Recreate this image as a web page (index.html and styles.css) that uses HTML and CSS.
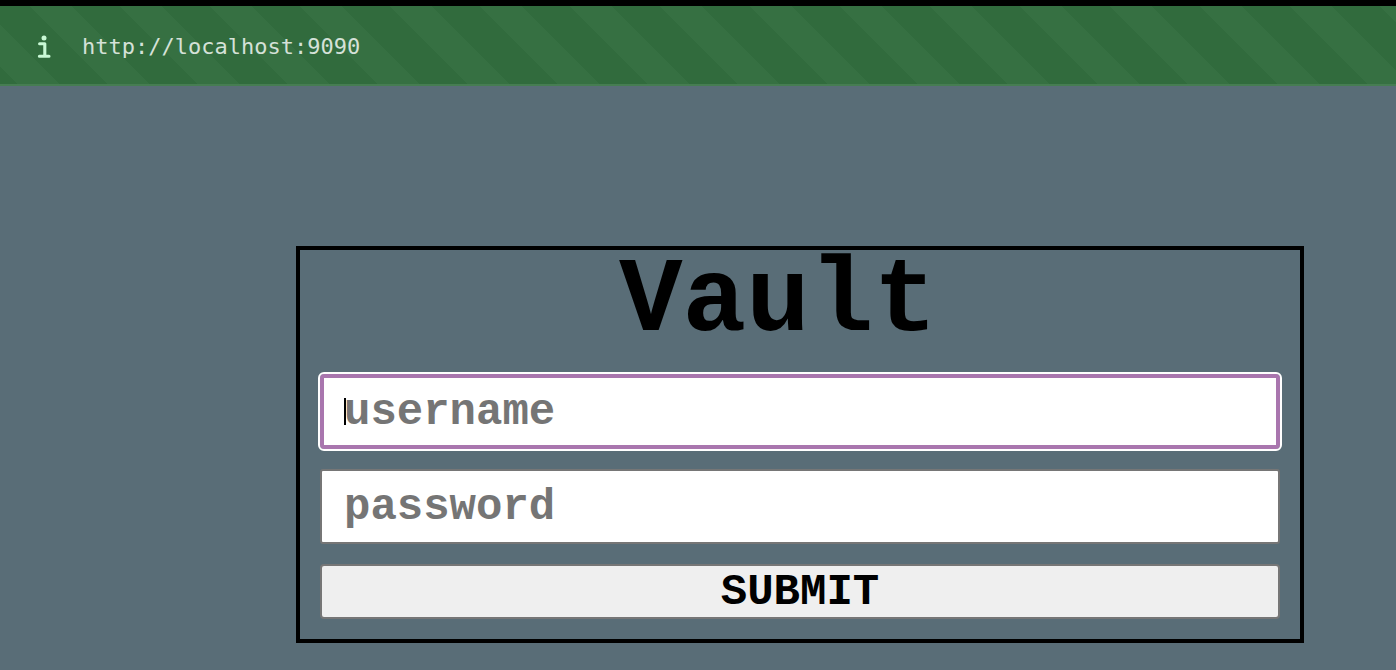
FILE: index.html
```html
<!DOCTYPE html>
<html lang="en">
<head>
<meta charset="utf-8">
<title>Vault</title>
<link rel="stylesheet" href="styles.css">
</head>
<body>
<header class="address-bar">
  <svg class="info-icon" viewBox="0 0 14 24" aria-hidden="true">
    <circle cx="7" cy="3" r="2.5"/>
    <path d="M2.6 8.8H7.8V20.6M2.4 21.2H12" fill="none" stroke="currentColor" stroke-width="3.1" stroke-linecap="round" stroke-linejoin="round"/>
  </svg>
  <span class="address">http://localhost:9090</span>
</header>
<main class="page">
  <form class="card">
    <h1 class="title">Vault</h1>
    <div class="control">
      <input class="field" type="text" name="username" placeholder="username" aria-label="username" autocomplete="off" autofocus>
      <span class="caret" aria-hidden="true"></span>
    </div>
    <input class="field" type="password" name="password" placeholder="password" aria-label="password">
    <button class="submit" type="submit">SUBMIT</button>
  </form>
</main>
</body>
</html>
```
FILE: styles.css
```css
* {
  box-sizing: border-box;
}

body {
  margin: 0;
  background: #596d77;
  color: #000;
  font-family: "Liberation Mono", monospace;
  font-weight: 700;
}

.address-bar {
  display: flex;
  align-items: center;
  gap: 31px;
  height: 86px;
  padding: 4px 0 0 37px;
  border-top: 6px solid #000;
  border-bottom: 2px solid #467d52;
  background: linear-gradient(45deg, #316b3d 9.5%, #367042 9.5% 33%, #316b3d 33% 59.5%, #367042 59.5% 83%, #316b3d 83%) left bottom / 90px 90px;
}

.info-icon {
  width: 14px;
  height: 24px;
  color: #c9f8d5;
  fill: currentColor;
}

.address {
  color: #d5e1d8;
  font: 400 22px/32px "DejaVu Sans Mono", monospace;
}

.page {
  padding: 160px 92px 27px 296px;
}

.card {
  display: flex;
  flex-direction: column;
  gap: 20px;
  padding: 0 20px 20px;
  border: 4px solid #000;
}

.title {
  margin: 0;
  padding-right: 44px;
  font-size: 106px;
  line-height: 104px;
  text-align: center;
}

.control {
  display: flex;
  position: relative;
}

.caret {
  display: none;
  position: absolute;
  top: 24px;
  left: 24px;
  width: 2px;
  height: 27px;
  background: #000;
}

.field {
  width: 100%;
  height: 75px;
  padding: 0 22px;
  border: 2px solid #767676;
  border-radius: 3px;
  background: #fff;
  color: #000;
  caret-color: transparent;
  font: inherit;
  font-size: 44px;
}

.field::placeholder {
  color: #757575;
  opacity: 1;
}

.field:focus {
  padding: 0 20px;
  border: 4px solid #a976ae;
  border-radius: 4px;
  outline: 2px solid #fff;
}

.field:not(:placeholder-shown) {
  caret-color: #000;
}

.field:focus:placeholder-shown + .caret {
  display: block;
}

.submit {
  height: 55px;
  padding: 0;
  border: 2px solid #767676;
  border-radius: 4px;
  background: #efefef;
  color: #000;
  font: inherit;
  font-size: 44px;
  line-height: 48px;
}
```
